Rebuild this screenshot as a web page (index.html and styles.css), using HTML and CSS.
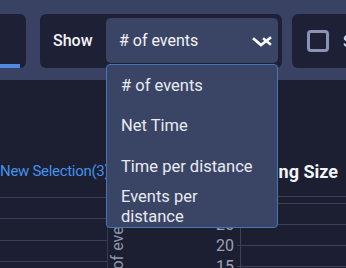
FILE: index.html
```html
<!DOCTYPE html>
<html lang="en">
<head>
<meta charset="utf-8">
<title>Show selector</title>
<link rel="stylesheet" href="styles.css">
</head>
<body>
  <header class="toolbar">
    <div class="panel tab-panel"><div class="tab-bar"></div></div>
    <div class="panel show-panel">
      <span class="show-label">Show</span>
      <div class="select">
        <span class="select-value"># of events</span>
        <svg class="chevron" width="20" height="14" viewBox="0 0 20 14">
          <polyline points="2,5 9,11 18,4" fill="none" stroke="#ffffff" stroke-width="2.6" stroke-linecap="square"/>
          <polyline points="12,5 18,10" fill="none" stroke="#ffffff" stroke-width="2.4" stroke-linecap="square"/>
        </svg>
      </div>
    </div>
    <div class="panel check-panel">
      <span class="checkbox"></span>
      <span class="check-label">Stack</span>
    </div>
  </header>

  <ul class="menu">
    <li class="menu-item"># of events</li>
    <li class="menu-item">Net Time</li>
    <li class="menu-item">Time per distance</li>
    <li class="menu-item">Events per distance</li>
  </ul>

  <main class="charts">
    <section class="chart-a">
      <div class="chart-a-title">New Selection(3)</div>
      <div class="grid-a">
        <div class="grid-row"></div>
        <div class="grid-row"></div>
        <div class="grid-row"></div>
        <div class="grid-row"></div>
      </div>
    </section>
    <section class="chart-b">
      <div class="chart-b-title">Binning Size</div>
      <div class="chart-b-body">
        <div class="y-title"><span class="y-title-text"># of events</span></div>
        <div class="ticks">
          <div class="tick">30</div>
          <div class="tick">25</div>
          <div class="tick">20</div>
          <div class="tick">15</div>
          <div class="tick">10</div>
        </div>
        <div class="plot">
          <div class="plot-top"></div>
          <div class="plot-row"></div>
          <div class="plot-row"></div>
          <div class="plot-row"></div>
          <div class="plot-row"></div>
        </div>
      </div>
    </section>
  </main>
</body>
</html>
```

FILE: styles.css
```css
html, body {
  margin: 0;
  padding: 0;
  overflow: hidden;
  width: 346px;
  height: 268px;
}

body {
  position: relative;
  background: #1c1f31;
  font-family: Roboto, "Liberation Sans", sans-serif;
  color: #f3f4f8;
}

.toolbar {
  display: flex;
  height: 80px;
  box-sizing: border-box;
  padding-top: 14px;
  background: #394262;
}

.panel {
  height: 54px;
  background: #1e2135;
  border-radius: 6px;
  box-sizing: border-box;
  flex: none;
}

.tab-panel {
  margin-left: -20px;
  width: 46px;
  display: flex;
  flex-direction: column;
  justify-content: flex-end;
  overflow: hidden;
}

.tab-bar {
  width: 40px;
  height: 4px;
  background: #4d8ae0;
}

.show-panel {
  margin-left: 14px;
  width: 242px;
  display: flex;
  align-items: center;
  padding: 4px 4px 5px 13px;
}

.show-label {
  font-size: 16px;
  font-weight: 500;
  width: 53px;
}

.select {
  width: 172px;
  height: 45px;
  box-sizing: border-box;
  background: #3a4465;
  border-radius: 5px;
  display: flex;
  align-items: center;
  justify-content: space-between;
  padding: 0 6px 0 13px;
}

.select-value {
  font-size: 16px;
}

.chevron {
  display: block;
}

.check-panel {
  margin-left: 10px;
  width: 60px;
  display: flex;
  align-items: center;
  padding-left: 15px;
  overflow: hidden;
  border-radius: 6px 0 0 6px;
}

.checkbox {
  flex: none;
  width: 22px;
  height: 22px;
  box-sizing: border-box;
  border: 3px solid #8a93b6;
  border-radius: 4px;
}

.check-label {
  margin-left: 14px;
  font-size: 16px;
}

.menu {
  position: absolute;
  left: 106px;
  top: 64px;
  width: 172px;
  box-sizing: border-box;
  margin: 0;
  padding: 0;
  list-style: none;
  background: #3a4465;
  border: 1px solid #4a73b3;
  border-radius: 4px;
  z-index: 5;
}

.menu-item {
  min-height: 40.5px;
  display: flex;
  align-items: center;
  padding: 0 18px 0 14px;
  font-size: 16.5px;
  line-height: 19.5px;
  color: #e9ebf2;
}

.charts {
  display: flex;
  height: 188px;
}

.chart-a {
  width: 107px;
  flex: none;
  border-right: 1px solid #343a50;
}

.chart-a-title {
  margin-top: 81px;
  line-height: 20px;
  font-size: 15px;
  letter-spacing: -0.3px;
  color: #4392ea;
  white-space: nowrap;
}

.grid-a {
  margin-top: 16px;
}

.grid-row {
  height: 20.3px;
  border-top: 1px solid #3b4055;
}

.chart-b {
  flex: 1;
  display: flex;
  flex-direction: column;
  min-width: 0;
}

.chart-b-title {
  margin-top: 81px;
  line-height: 22px;
  height: 22px;
  font-size: 18px;
  font-weight: 700;
  text-align: right;
  padding-right: 8px;
  white-space: nowrap;
}

.chart-b-body {
  margin-top: 13px;
  display: grid;
  grid-template-columns: 20px 1fr 106px;
  flex: 1;
}

.y-title {
  display: flex;
  justify-content: center;
  align-items: flex-start;
}

.y-title-text {
  writing-mode: vertical-rl;
  transform: rotate(180deg);
  font-size: 16px;
  line-height: 18px;
  color: #8e94a8;
  white-space: nowrap;
  margin-top: 8px;
}

.ticks {
  margin-top: -3.5px;
  padding-right: 6px;
  text-align: right;
}

.tick {
  line-height: 21px;
  font-size: 16px;
  color: #9ba0b3;
}

.plot {
  border-left: 1px solid #3d4257;
}

.plot-top {
  margin-left: -4px;
  height: 6px;
  border-top: 1px solid #3d4257;
}

.plot-row {
  margin-left: -4px;
  height: 20px;
  border-top: 1px solid #3d4257;
}
```
